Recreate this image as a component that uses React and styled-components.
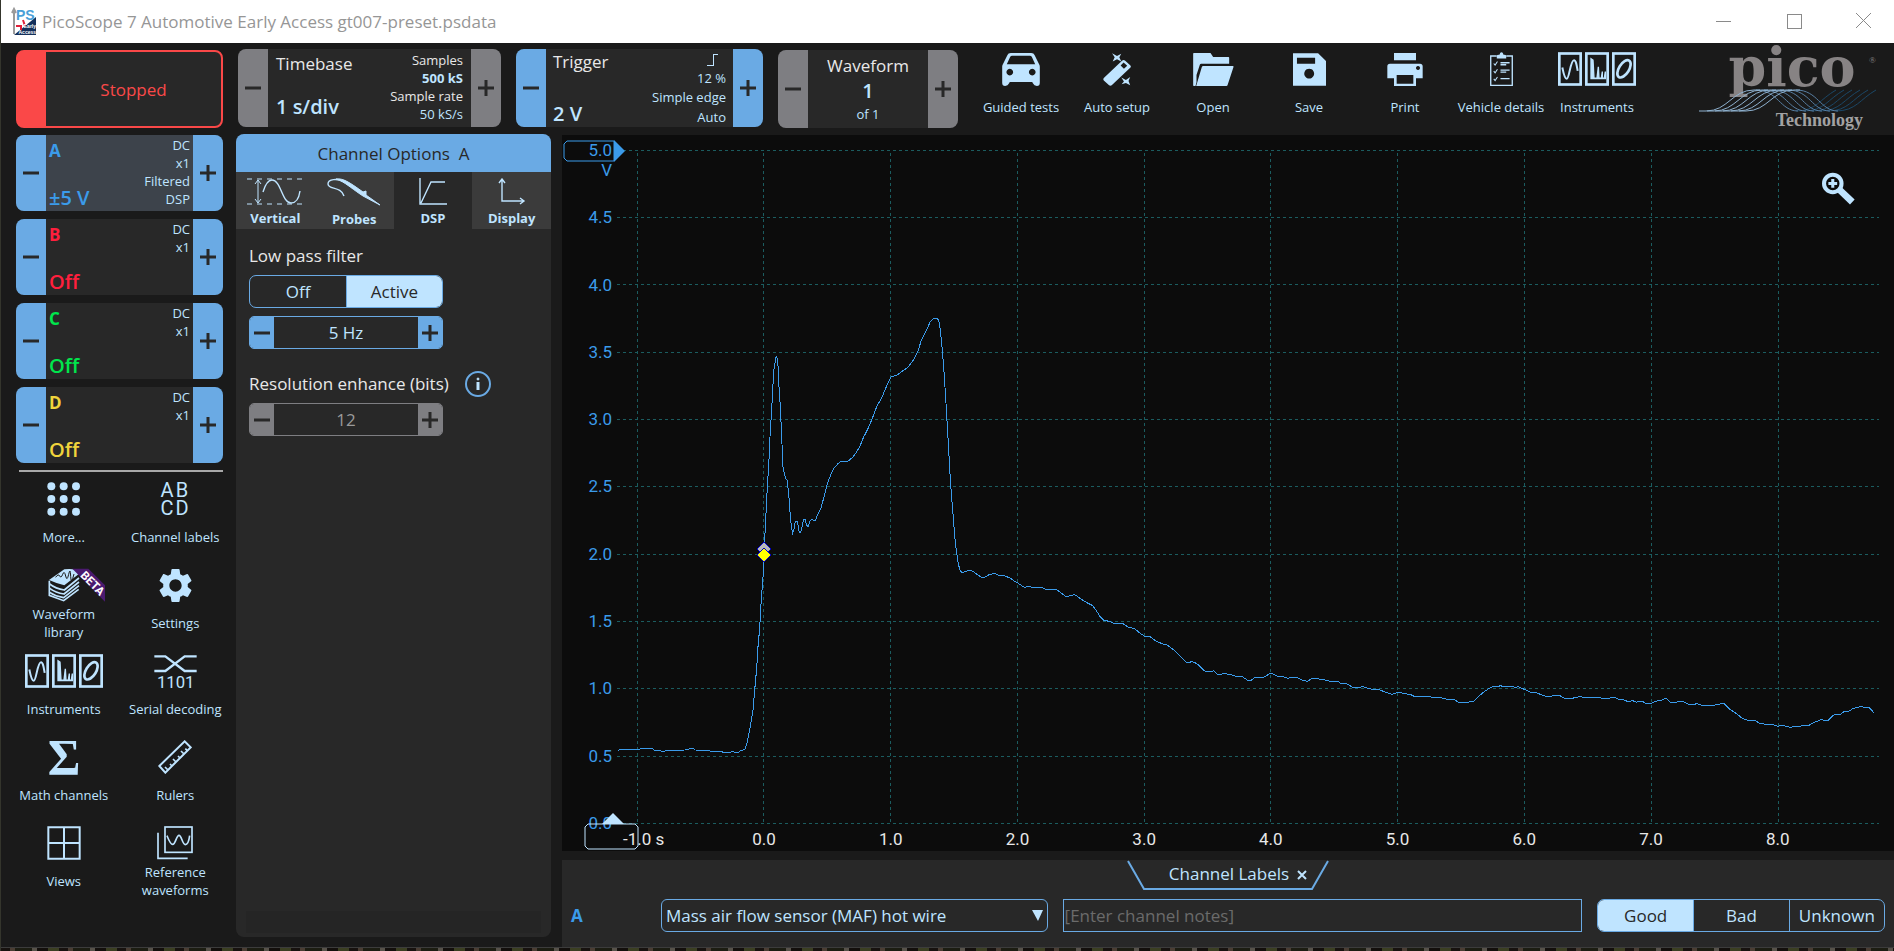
import React from "react";
import styled, { createGlobalStyle, ThemeProvider, css } from "styled-components";
import { MdSettings } from "react-icons/md";

const theme = {
  bg: "#1a1a1a",
  card: "#282828",
  blue: "#6aaae4",
  grey: "#7e7e82",
  pale: "#bfe4ff",
  white: "#e8e8e8",
  red: "#fa4848",
  trace: "#3b9bea",
  grid: "#1b5c5f",
  plot: "#0c0c0c",
  sm: "13px",
  md: "17px",
  lg: "20px",
};

const GlobalStyle = createGlobalStyle`
  *, *::before, *::after { box-sizing: border-box; }
  body { margin: 0; background: #1a1a1a; }
  body, button, input, select { font-family: "Open Sans", "Noto Sans", sans-serif; }
  button { padding: 0; border: 0; background: none; color: inherit; font-size: inherit; cursor: pointer; }
`;

/* ---------- window frame ---------- */

const Window = styled.div`
  display: flex;
  flex-direction: column;
  min-height: 100vh;
  border-left: 1px solid #34352c;
  color: ${(p) => p.theme.white};
  font-size: ${(p) => p.theme.md};
`;

const TitleBar = styled.header`
  display: flex;
  align-items: center;
  gap: 10px;
  height: 43px;
  padding-left: 11px;
  background: #fff;
`;

const Title = styled.h1`
  flex: 1;
  margin: 0 0 0 -5px;
  font-size: ${(p) => p.theme.md};
  font-weight: 400;
  color: #969696;
`;

const WindowButton = styled.button`
  display: flex;
  align-items: center;
  justify-content: center;
  align-self: flex-start;
  width: 60px;
  height: 41px;
`;

const DesktopEdge = styled.div`
  height: 5px;
  border-top: 1px solid #3c3c3c;
  background: repeating-linear-gradient(90deg, #17120f 0 9px, #4a3d33 9px 14px, #1c1d12 14px 31px, #57524a 31px 36px, #130f0c 36px 47px, #3b3f22 47px 58px);
`;

/* ---------- top bar ---------- */

const TopBar = styled.div`
  display: flex;
  align-items: flex-start;
  gap: 15px;
  height: 92px;
  padding: 6px 14px 0 15px;
  background: ${(p) => p.theme.bg};
`;

const StopButton = styled.button`
  display: flex;
  width: 207px;
  height: 78px;
  margin-top: 1px;
  border: 2px solid ${(p) => p.theme.red};
  border-left-width: 30px;
  border-radius: 8px;
  background: ${(p) => p.theme.card};
  color: ${(p) => p.theme.red};
  font-size: ${(p) => p.theme.md};
  align-items: center;
  justify-content: center;
`;

const Control = styled.section`
  display: flex;
  flex: none;
  width: ${(p) => p.$width}px;
  height: ${(p) => p.$height || 78}px;
  margin-top: ${(p) => (p.$low ? 1 : 0)}px;
  border-radius: 8px;
  overflow: hidden;
  background: ${(p) => (p.$selected ? "#3d434b" : p.theme.card)};
`;

const Step = styled.button`
  display: flex;
  flex: none;
  align-items: center;
  justify-content: center;
  width: ${(p) => p.$width || 30}px;
  background: ${(p) => (p.$muted ? p.theme.grey : p.theme.blue)};
`;

const ControlBody = styled.div`
  display: flex;
  flex: 1;
  justify-content: space-between;
  padding: ${(p) => p.$pad || "2px 8px"};
`;

const Stack = styled.div`
  display: flex;
  flex-direction: column;
  justify-content: space-between;
  padding: ${(p) => p.$pad || 0};
`;

const Name = styled.span`
  font-size: ${(p) => p.theme.md};
  line-height: 22px;
  font-weight: ${(p) => (p.$strong ? 700 : 400)};
  color: ${(p) => p.$color || p.theme.white};
`;

const Value = styled.span`
  font-size: ${(p) => p.theme.lg};
  line-height: 24px;
  font-weight: 600;
  color: ${(p) => p.$color || p.theme.pale};
`;

const Details = styled.div`
  display: flex;
  flex-direction: column;
  align-items: flex-end;
  font-size: ${(p) => p.theme.sm};
  line-height: 18px;
  color: ${(p) => p.theme.pale};
  ${(p) => p.$spread && css`justify-content: space-between;`}
`;

const EdgeMark = styled.span`
  display: flex;
  padding: 3px 7px 0 0;
`;

const Muted = styled.span`
  color: ${(p) => p.theme.white};
`;

const Centered = styled.div`
  display: flex;
  flex: 1;
  flex-direction: column;
  align-items: center;
  justify-content: center;
  gap: 2px;
`;

const Small = styled.span`
  font-size: ${(p) => p.theme.sm};
  line-height: 18px;
  color: ${(p) => p.theme.pale};
`;

const Tools = styled.nav`
  display: flex;
  flex: 1;
`;

const ToolButton = styled.button`
  display: flex;
  flex-direction: column;
  align-items: center;
  width: 96px;
  padding-top: 3px;
  font-size: ${(p) => p.theme.sm};
  line-height: 18px;
  color: ${(p) => p.theme.pale};
  white-space: nowrap;
`;

const IconBox = styled.span`
  display: flex;
  align-items: center;
  justify-content: center;
  height: 34px;
  flex: none;
  color: ${(p) => p.theme.pale};
`;

const ToolLabel = styled.span`
  margin-top: 12px;
`;

/* ---------- main area ---------- */

const Main = styled.main`
  display: flex;
  flex: 1;
  background: ${(p) => p.theme.bg};
`;

const Sidebar = styled.aside`
  width: 223px;
  margin-left: 7px;
`;

const Channels = styled.div`
  display: flex;
  flex-direction: column;
  gap: 8px;
  padding: 0 8px;
`;

const Rule = styled.hr`
  height: 2px;
  margin: 7px 8px 0 11px;
  border: 0;
  background: #a8a8a8;
`;

const Menu = styled.nav`
  display: grid;
  grid-template-columns: 1fr 1fr;
  row-gap: 13px;
  margin-top: 10px;
`;

const MenuButton = styled.button`
  display: flex;
  flex-direction: column;
  align-items: center;
  gap: 3px;
  font-size: ${(p) => p.theme.sm};
  line-height: 18px;
  color: ${(p) => p.theme.pale};
`;

const MenuLabel = styled.span`
  display: flex;
  align-items: center;
  height: 36px;
  max-width: 98px;
`;

const Panel = styled.section`
  display: flex;
  flex-direction: column;
  width: 315px;
  margin: -1px 11px 10px 5px;
  border-radius: 8px;
  overflow: hidden;
  background: ${(p) => p.theme.card};
`;

const PanelTitle = styled.h2`
  margin: 0;
  height: 38px;
  background: ${(p) => p.theme.blue};
  color: #282828;
  font-size: ${(p) => p.theme.md};
  font-weight: 400;
  line-height: 40px;
  text-align: center;
  white-space: pre;
`;

const Tabs = styled.div`
  display: grid;
  grid-template-columns: repeat(4, 1fr);
`;

const Tab = styled.button`
  display: flex;
  flex-direction: column;
  align-items: center;
  gap: 4px;
  height: 57px;
  padding-top: 6px;
  background: ${(p) => (p.$open ? p.theme.card : "#3b3b3b")};
  color: ${(p) => p.theme.pale};
  font-size: ${(p) => p.theme.sm};
  line-height: 18px;
  font-weight: 700;
`;

const PanelBody = styled.div`
  flex: 1;
  padding: 16px 13px 0;
`;

const PanelFoot = styled.div`
  height: 22px;
  margin: 0 10px 4px;
  background: #252525;
`;

const FieldLabel = styled.div`
  display: flex;
  align-items: center;
  gap: 15px;
  height: 22px;
  line-height: 22px;
  white-space: nowrap;
`;

const Segments = styled.div`
  display: grid;
  grid-template-columns: repeat(${(p) => p.$count}, 1fr);
  width: ${(p) => p.$width}px;
  height: 33px;
  margin-top: ${(p) => p.$top || 0}px;
  border: 1px solid ${(p) => p.theme.blue};
  border-radius: 7px;
  overflow: hidden;
`;

const Segment = styled.button`
  background: ${(p) => (p.$on ? p.theme.pale : "transparent")};
  color: ${(p) => (p.$on ? "#282828" : p.theme.pale)};
  & + & { border-left: 1px solid ${(p) => p.theme.blue}; }
`;

const Spinner = styled.div`
  display: flex;
  width: 194px;
  height: 33px;
  margin-top: 8px;
  border: 1px solid ${(p) => (p.$muted ? p.theme.grey : p.theme.blue)};
  border-radius: 5px;
  overflow: hidden;
`;

const SpinnerValue = styled.output`
  flex: 1;
  line-height: 32px;
  text-align: center;
  color: ${(p) => (p.$muted ? "#9a9a9a" : p.theme.pale)};
`;

const Group = styled.div`
  margin-bottom: 24px;
`;

/* ---------- chart ---------- */

const Workspace = styled.div`
  display: flex;
  flex: 1;
  flex-direction: column;
  min-width: 0;
`;

const Chart = styled.section`
  position: relative;
  display: grid;
  flex: 1;
  grid-template-columns: 55px 1fr 15px;
  grid-template-rows: 15px 1fr 27px;
  background: ${(p) => p.theme.plot};
  font-family: Roboto, sans-serif;
`;

const YAxis = styled.div`
  grid-area: 2 / 1;
  display: flex;
  flex-direction: column;
  justify-content: space-between;
  margin: -10px 0 -9px;
  padding-right: 5px;
  color: ${(p) => p.theme.trace};
  line-height: 20px;
  text-align: right;
`;

const YTick = styled.div`
  height: 20px;
`;

const XAxis = styled.div`
  grid-area: 3 / 1 / 4 / 4;
  display: flex;
  margin: 5px 53px 0 12px;
  line-height: 20px;
  text-align: center;
`;

const XTick = styled.div`
  flex: 1 0 0;
  white-space: pre;
`;

const Plot = styled.svg`
  grid-area: 2 / 2;
  width: 100%;
  height: 100%;
  overflow: visible;
`;

const AxisFlag = styled.svg`
  position: absolute;
  left: 1px;
  top: 5px;
`;

const TimeFlag = styled.svg`
  position: absolute;
  left: 21px;
  bottom: 1px;
`;

const Trigger = styled.svg`
  position: absolute;
  left: calc(55px + (100% - 70px) * 147 / 1262 - 8px);
  top: calc(15px + (100% - 42px) * 401 / 673 - 11px);
`;

const ZoomButton = styled.button`
  position: absolute;
  right: 39px;
  top: 37px;
  color: ${(p) => p.theme.pale};
`;

/* ---------- channel labels dock ---------- */

const Dock = styled.section`
  margin-top: 9px;
  height: 87px;
  background: ${(p) => p.theme.card};
`;

const DockTab = styled.div`
  display: flex;
  align-items: center;
  justify-content: center;
  gap: 8px;
  width: 202px;
  height: 30px;
  margin: 0 auto;
  padding: 0 0 3px 20px;
  position: relative;
  color: ${(p) => p.theme.pale};
  white-space: nowrap;
`;

const DockOutline = styled.svg`
  position: absolute;
  inset: 0;
  pointer-events: none;
`;

const DockRow = styled.div`
  display: flex;
  align-items: center;
  gap: 15px;
  margin-top: 9px;
  padding: 0 9px;
`;

const DockChannel = styled.label`
  width: 75px;
  font-weight: 700;
  color: ${(p) => p.theme.trace};
`;

const SelectWrap = styled.div`
  position: relative;
  flex: 3 1 0;
  color: ${(p) => p.theme.pale};
`;

const Select = styled.select`
  display: block;
  width: 100%;
  height: 33px;
  padding: 0 24px 0 4px;
  appearance: none;
  border: 1px solid ${(p) => p.theme.blue};
  border-radius: 6px;
  background: ${(p) => p.theme.card};
  color: ${(p) => p.theme.pale};
  font-size: ${(p) => p.theme.md};
`;

const Caret = styled.svg`
  position: absolute;
  right: 5px;
  top: 11px;
  pointer-events: none;
`;

const Notes = styled.input`
  flex: 4 1 0;
  min-width: 0;
  height: 33px;
  padding: 0 1px;
  border: 1px solid ${(p) => p.theme.blue};
  background: ${(p) => p.theme.card};
  color: ${(p) => p.theme.pale};
  font-size: ${(p) => p.theme.md};
  &::placeholder { color: #6b6b6b; opacity: 1; }
`;

/* ---------- icons ---------- */

const Minus = () => (
  <svg width="16" height="16" stroke="#282828" strokeWidth="3" aria-label="minus"><path d="M0 8H16" /></svg>
);
const Plus = () => (
  <svg width="16" height="16" stroke="#282828" strokeWidth="3" aria-label="plus"><path d="M0 8H16M8 0V16" /></svg>
);

const CarIcon = () => (
  <svg width="38" height="33" viewBox="0 0 114 100" fill="currentColor" fillRule="evenodd">
    <path d="M16 6Q18 0 26 0H88Q96 0 98 6L113 36Q114 38 114 42V90Q114 100 105 100Q97 100 93 92L91 88H23L21 92Q17 100 9 100Q0 100 0 90V42Q0 38 1 36ZM30 8Q26 8 24 12L14 34H100L90 12Q88 8 84 8ZM23 48a10 10 0 1 0 .1 0ZM91 48a10 10 0 1 0 .1 0Z" />
  </svg>
);
const WandIcon = () => (
  <svg width="28" height="33" viewBox="0 0 84 100" fill="currentColor" fillRule="evenodd">
    <path d="M58 23Q62 19 66 23L82 37Q86 41 82 45L26 98Q22 101 18 98L2 83Q-1 80 2 76ZM62 29L53 38L63 48L73 39Z" />
    <path d="M27 1L42 9L55 2L49 13L55 26L42 19L29 26L35 13ZM55 74L69 82L82 73L77 85L82 98L69 91L56 95L63 86Z" />
  </svg>
);
const FolderIcon = () => (
  <svg width="41" height="33" viewBox="0 0 122 99" fill="currentColor">
    <path d="M0 2Q0 0 2 0H52L60 12H106Q108 12 108 14V32H24Q21 32 20 35L10 66V88L7 99H2Q0 99 0 97Z" />
    <path d="M30 39H119Q122 39 121 42L103 97Q102 99 100 99H9L26 42Q27 39 30 39Z" />
  </svg>
);
const SaveIcon = () => (
  <svg width="33" height="33" viewBox="0 0 100 99" fill="currentColor" fillRule="evenodd">
    <path d="M0 0H76L100 24V99H0ZM12 14V32H67V14ZM49 47a15 15 0 1 0 .1 0Z" />
  </svg>
);
const PrintIcon = () => (
  <svg width="36" height="33" viewBox="0 0 106 99" fill="currentColor" fillRule="evenodd">
    <path d="M20 0H86V22H20ZM8 32H98Q106 32 106 40V76H86V99H20V76H0V40Q0 32 8 32ZM28 66V92H78V66ZM92 39a6 6 0 1 0 .1 0Z" />
  </svg>
);
const ClipboardIcon = () => (
  <svg width="23" height="34" viewBox="0 0 68 101" fill="none" stroke="currentColor" strokeWidth="4">
    <path d="M20 12H2V99H66V12H48" />
    <path d="M20 19V12Q20 8 26 8H28Q30 1 34 1Q38 1 40 8H42Q48 8 48 12V19Z" fill="currentColor" stroke="none" />
    <path d="M31 32H58M31 38H48M31 54H58M31 60H48M31 79H58" />
    <path d="M11 34L15 39L22 28M11 57L15 62L22 51M11 80L15 85L22 74" strokeWidth="3" />
  </svg>
);
const InstrumentsIcon = () => (
  <svg width="78" height="34" viewBox="0 0 234 101" fill="none" stroke="currentColor">
    <g strokeWidth="8">
      <rect x="4" y="4" width="64" height="93" />
      <rect x="85" y="4" width="64" height="93" />
      <rect x="166" y="4" width="64" height="93" />
    </g>
    <path d="M13 46C17 66 21 80 26 80C34 80 37 24 48 24C54 24 56 38 59 56" strokeWidth="6" />
    <path d="M99 20V79H142V58L139 78L133 78V58L130 78H123L121 44L117 78H108L105 24Z" strokeWidth="4" fill="currentColor" />
    <ellipse cx="198" cy="50" rx="15" ry="29" transform="rotate(32 198 50)" strokeWidth="8" />
  </svg>
);
const MoreIcon = () => (
  <svg width="33" height="34" viewBox="0 0 99 102" fill="currentColor">
    {[13, 51, 89].map((y) => [13, 50, 87].map((x) => <circle key={x + "-" + y} cx={x} cy={y} r="12" />))}
  </svg>
);
const LabelsIcon = () => (
  <svg width="30" height="34" overflow="visible" fill="currentColor" fontFamily="Roboto, sans-serif" fontSize="20">
    <text textAnchor="middle">
      <tspan x="7" y="15">A</tspan><tspan x="22" y="15">B</tspan>
      <tspan x="7" y="33">C</tspan><tspan x="22" y="33">D</tspan>
    </text>
  </svg>
);
const LibraryIcon = () => (
  <svg width="82" height="34" viewBox="0 0 246 102" fill="none" overflow="visible">
    <path d="M78 36L124 4Q150 0 178 10L124 52Q100 46 78 36Z" fill="currentColor" />
    <path d="M98 28q8-12 12-4t9-5t9 5t9-5t6 6t10-7" stroke="#1a1a1a" strokeWidth="3" />
    <g stroke="currentColor" strokeWidth="5">
      <path d="M79 38V82L122 98L167 64" />
      <path d="M80 48Q98 62 124 66L168 30" />
      <path d="M80 61Q98 74 123 78L168 42" />
      <path d="M80 73Q98 85 122 89L168 53" />
    </g>
    <path d="M148 2H196L246 52V101Z" fill="#4b1a70" />
    <text transform="translate(170 24) rotate(45)" fill="#fff" fontFamily="Roboto, sans-serif" fontWeight="700" fontSize="35">BETA</text>
  </svg>
);
const SerialIcon = () => (
  <svg width="43" height="34" viewBox="0 0 129 102" overflow="visible" fill="none" stroke="currentColor">
    <path d="M1 7H34L92 51H128M1 51H34L92 7H128" strokeWidth="7" />
    <text x="65" y="101" fill="currentColor" stroke="none" textAnchor="middle" fontFamily="Roboto, sans-serif" fontSize="50">1101</text>
  </svg>
);
const SigmaIcon = () => (
  <svg width="34" height="34" overflow="visible" fill="currentColor">
    <text x="17" y="34" textAnchor="middle" fontFamily="Liberation Serif, serif" fontWeight="700" fontSize="50">Σ</text>
  </svg>
);
const RulerIcon = () => (
  <svg width="34" height="34" viewBox="0 0 102 102" fill="none" stroke="currentColor" strokeWidth="6">
    <path d="M4 78L80 4L98 22L22 98Z" />
    <path d="M30 90L21 81M42 78L36 72M54 66L45 57M66 54L60 48M78 42L69 33M88 32L82 26" strokeWidth="5" />
  </svg>
);
const ViewsIcon = () => (
  <svg width="34" height="34" viewBox="0 0 102 102" fill="none" stroke="currentColor" strokeWidth="6">
    <path d="M4 4H98V98H4ZM51 4V98M4 51H98" />
  </svg>
);
const ReferenceIcon = () => (
  <svg width="36" height="34" viewBox="0 0 108 102" fill="none" stroke="currentColor" strokeWidth="5">
    <rect x="24" y="3" width="81" height="76" />
    <path d="M3 20V97H92" />
    <path d="M30 29C36 44 40 55 47 55C56 55 58 28 66 28C74 28 76 56 85 56C92 56 96 44 98 29" />
  </svg>
);

const VerticalIcon = () => (
  <svg width="56" height="27" fill="none" stroke="currentColor" strokeWidth="2">
    <path d="M0 1H56M0 26H56" strokeDasharray="5 5" strokeWidth="1" />
    <path d="M11 2V25M8 6L11 2L14 6M8 21L11 25L14 21" strokeWidth="1" />
    <path d="M16 14C19 4 22 2 25 2C34 2 35 25 44 25C49 25 52 20 53 13" strokeWidth="1.4" />
  </svg>
);
const ProbeIcon = () => (
  <svg width="54" height="28" fill="none" stroke="currentColor">
    <path d="M17 18C14 8 1 12 1 6C1 1 10 0 18 4" strokeWidth="1.4" />
    <path d="M9 1C16 0 22 4 36 14L39 13L39 17L53 27L36 18L33 16C24 10 18 4 9 1Z" fill="currentColor" strokeWidth="1" />
  </svg>
);
const DspIcon = () => (
  <svg width="28" height="27" fill="none" stroke="currentColor" strokeWidth="1.4">
    <path d="M1 0V26H28M2 25L12 4H26" />
  </svg>
);
const DisplayIcon = () => (
  <svg width="28" height="27" fill="none" stroke="currentColor" strokeWidth="1.4">
    <path d="M4 1V23H26M1 5L4 1L7 5M22 20L26 23L22 26" />
  </svg>
);
const InfoIcon = () => (
  <svg width="28" height="28" fill="none" stroke="#6aaae4" strokeWidth="2">
    <circle cx="14" cy="14" r="12" />
    <circle cx="14" cy="9" r="1" fill="#bfe4ff" stroke="#bfe4ff" strokeWidth="1" />
    <path d="M14 12V20" stroke="#bfe4ff" strokeWidth="3" />
  </svg>
);
const ZoomIcon = () => (
  <svg width="33" height="33" viewBox="0 0 98 96" fill="none" stroke="currentColor">
    <circle cx="32" cy="33" r="26" strokeWidth="12" />
    <path d="M32 20V46M19 33H45" strokeWidth="9" />
    <path d="M50 50L90 88" strokeWidth="20" />
  </svg>
);
const EdgeIcon = () => (
  <svg width="12" height="14" fill="none" stroke="currentColor" strokeWidth="1" shapeRendering="crispEdges"><path d="M0 12H6V1H11" /></svg>
);
const AppIcon = () => (
  <svg width="25" height="26" overflow="visible">
    <path d="M2 0V25M0 4L2 0L4 4" stroke="#9a9a9a" strokeWidth="2" fill="none" />
    <path d="M24 8V26H2Z" fill="#14305a" />
    <path d="M4 17H9V21M11 11L13 17" stroke="#e0203a" strokeWidth="2" fill="none" />
    <text x="4" y="11" fontSize="14" fontWeight="700" fill="#4a9fd8" fontFamily="Liberation Sans, sans-serif">PS</text>
    <text x="24" y="19" fontSize="5" fontWeight="700" fill="#fff" textAnchor="end" fontFamily="Liberation Sans, sans-serif">Early</text>
    <text x="24" y="25" fontSize="5" fontWeight="700" fill="#fff" textAnchor="end" fontFamily="Liberation Sans, sans-serif">Access</text>
  </svg>
);

const PicoLogo = () => (
  <svg width="182" height="80" viewBox="0 0 182 80" overflow="visible" role="img" aria-label="pico Technology">
    <text x="94" y="37" textAnchor="middle" fontFamily="DejaVu Serif, serif" fontWeight="700" fontSize="54" fill="#878384">pico</text>
    <text x="171" y="14" fontFamily="Liberation Serif, serif" fontSize="9" fill="#878384">®</text>
    <g fill="none" strokeWidth="1">
      {[0, 1, 2, 3, 4, 5].map((i) => (
        <path key={"c" + i} transform={`translate(${i * 8} 0)`} stroke="#1b4766" d="M98 62C118 62 122 50 138 41" />
      ))}
      {[0, 1, 2, 3, 4, 5].map((i) => (
        <path key={"b" + i} transform={`translate(${i * 8} 0)`} stroke="#587fa3" d="M58 41C80 41 82 62 100 62" />
      ))}
      {[0, 1, 2, 3, 4, 5].map((i) => (
        <path key={"a" + i} transform={`translate(${i * 8} 0)`} stroke="#8fb2d0" d="M1 62H8C30 62 34 41 56 41H62" />
      ))}
    </g>
    <text x="165" y="77" textAnchor="end" fontFamily="Liberation Serif, serif" fontWeight="700" fontSize="18" fill="#a2a2a2">Technology</text>
  </svg>
);

/* ---------- data ---------- */

const channels = [
  { id: "A", value: "±5 V", color: "#3b9bea", details: ["DC", "x1", "Filtered", "DSP"], selected: true },
  { id: "B", value: "Off", color: "#ff1f3d", details: ["DC", "x1"] },
  { id: "C", value: "Off", color: "#00e64d", details: ["DC", "x1"] },
  { id: "D", value: "Off", color: "#f0d43c", details: ["DC", "x1"] },
];

const tools = [
  ["Guided tests", CarIcon],
  ["Auto setup", WandIcon],
  ["Open", FolderIcon],
  ["Save", SaveIcon],
  ["Print", PrintIcon],
  ["Vehicle details", ClipboardIcon],
  ["Instruments", InstrumentsIcon],
];

const GearIcon = () => <MdSettings size={41} />;

const menu = [
  ["More...", MoreIcon],
  ["Channel labels", LabelsIcon],
  ["Waveform library", LibraryIcon],
  ["Settings", GearIcon],
  ["Instruments", InstrumentsIcon],
  ["Serial decoding", SerialIcon],
  ["Math channels", SigmaIcon],
  ["Rulers", RulerIcon],
  ["Views", ViewsIcon],
  ["Reference waveforms", ReferenceIcon],
];

const tabs = [
  ["Vertical", VerticalIcon],
  ["Probes", ProbeIcon],
  ["DSP", DspIcon],
  ["Display", DisplayIcon],
];

const volts = ["5.0", "4.5", "4.0", "3.5", "3.0", "2.5", "2.0", "1.5", "1.0", "0.5", "0.0"];
const seconds = ["   -1.0 s", "0.0", "1.0", "2.0", "3.0", "4.0", "5.0", "6.0", "7.0", "8.0"];

// Captured trace, in blocks that each carry their own origin.
const blocks = [
  {
    x: -51, y: 390,
    points: "55,1411 60,1408 118,1408 125,1405 132,1407 143,1405 157,1406 166,1413 180,1411 186,1414 205,1412 212,1411 255,1410 270,1406 280,1406 286,1410 325,1411 333,1414 362,1414 370,1417 390,1417 398,1414 405,1417 415,1417 420,1413 427,1411 436,1406 441,1388 448,1355 455,1313 459,1290 465,1220 470,1165 474,1100 479,1045 484,955 490,880 493,800 496,740 502,620 506,560 510,470 516,370 521,275 525,248 528,230 531,233 534,257 537,320 541,380 545,470 549,560 553,582 557,596 562,602 567,655 571,710 575,745 578,759 582,748 586,723 591,724 595,740 598,758 602,758 606,740 611,718 615,718 620,737 625,739 630,724 635,718 645,723 655,700 663,685 672,650 681,615 690,590 700,567 712,553 722,544 743,544 757,533 770,516 780,498 790,473 803,448 817,415 830,380 845,354 860,318 873,290 890,286 905,275 925,261 940,240 953,216 963,184 978,154 990,127 998,117 1010,115 1016,120 1021,150 1027,210 1033,290 1038,370 1045,490 1051,600 1058,690 1066,790 1073,840 1079,869 1086,878 1095,875 1105,871 1117,873 1128,881 1145,892 1155,891 1167,884 1183,880 1195,885 1213,887 1230,894 1245,905",
  },
  {
    x: 1149, y: 1170,
    points: "52,128 62,135 73,142 85,140 100,142 128,143 138,148 158,148 172,150 185,160 197,169 207,168 222,164 230,167 240,175 255,185 278,197 288,210 300,230 311,241 328,244 342,250 368,250 385,262 403,265 418,278 433,288 450,290 470,305 490,312 503,316 522,330 540,348 558,366 570,367 575,364 585,368 598,377 613,392 620,395 636,394 640,392 653,403 663,403 670,400 693,404 707,409 727,410 743,421 753,421 765,412 782,414 795,410 805,403 815,400 832,408 850,410 865,415 875,412 890,412 907,421 922,424 937,415 950,416 972,419 990,424 1015,425 1022,430 1040,431 1058,442 1082,442 1088,439 1098,443 1118,448 1138,449 1155,456 1175,463 1185,460 1195,457 1215,461 1232,464 1243,469 1290,470 1297,472",
  },
  {
    x: 2349, y: 1350,
    points: "122,293 142,298 162,298 175,307 205,307 210,304 223,303 235,290 250,277 272,262 280,260 295,259 302,257 310,260 337,260 345,262 355,260 373,268 392,277 410,279 440,290 453,289 460,286 480,287 493,295 518,295 525,292 542,290 552,292 600,293 607,295 627,295 633,292 645,292 657,298 670,299 682,304 692,304 696,301 710,307 716,304 727,304 737,310 755,310 765,304 785,301 793,296 799,296 812,307 830,307 835,304 849,304 865,313 885,313 890,310 905,316 940,316 958,313 963,310 973,311 988,327 1010,341 1028,356 1045,361 1065,362 1080,370 1098,373 1120,374 1135,379 1142,376 1152,377 1170,382 1185,379 1200,379 1207,376 1227,376 1240,368 1255,363 1263,358 1272,361 1285,361 1298,347 1305,343 1322,343 1332,335 1348,333 1360,325 1375,322 1385,319 1390,322 1408,323 1415,330 1421,338",
  },
];

const trace = blocks
  .flatMap((b) => b.points.split(" ").map((p) => {
    const [x, y] = p.split(",").map(Number);
    return `${x + b.x},${y + b.y}`;
  }))
  .join(" ");

const gridX = seconds.map((_, i) => 60 + (i * 3423) / 9);
const gridY = volts.map((_, i) => (i * 2019) / 10 + 1);

/* ---------- parts ---------- */

function ChannelCard({ channel }) {
  return (
    <Control $width={207} $height={76} $selected={channel.selected}>
      <Step aria-label={`Channel ${channel.id} down`}><Minus /></Step>
      <ControlBody $pad="1px 3px">
        <Stack $pad="4px 0 0">
          <Name $strong $color={channel.color}>{channel.id}</Name>
          <Value $color={channel.color}>{channel.value}</Value>
        </Stack>
        <Details>
          {channel.details.map((d) => <span key={d}>{d}</span>)}
        </Details>
      </ControlBody>
      <Step aria-label={`Channel ${channel.id} up`}><Plus /></Step>
    </Control>
  );
}

function Scope() {
  return (
    <Chart aria-label="Waveform view">
      <YAxis>
        {volts.map((v, i) => (
          <YTick key={v}>{v}{i === 0 && <div>V</div>}</YTick>
        ))}
      </YAxis>
      <Plot viewBox="0 0 3786 2022" preserveAspectRatio="none" shapeRendering="crispEdges" fill="none">
        <g stroke={theme.grid} strokeDasharray="3 3">
          {gridY.map((y) => <path key={y} d={`M0 ${y}H3786`} vectorEffect="non-scaling-stroke" />)}
          {gridX.map((x) => <path key={x} d={`M${x} 10V2022`} vectorEffect="non-scaling-stroke" />)}
        </g>
        <polyline points={trace} stroke={theme.trace} vectorEffect="non-scaling-stroke" />
      </Plot>
      <XAxis>
        {seconds.map((s) => <XTick key={s}>{s}</XTick>)}
      </XAxis>
      <AxisFlag width="62" height="22" fill="none">
        <path d="M4 1H51V21H4L1 18V4Z" stroke={theme.trace} />
        <path d="M51 0L62 11L51 22Z" fill={theme.trace} />
      </AxisFlag>
      <TimeFlag width="56" height="37" fill="none">
        <path d="M5 11H52L55 14V33L52 36H5L2 33V14Z" stroke={theme.pale} />
        <path d="M19 11L30 0L41 11Z" fill={theme.pale} />
      </TimeFlag>
      <Trigger width="16" height="22">
        <path d="M8 1L15 8L8 15L1 8Z" fill="#b8b8b8" stroke="#0000c8" />
        <path d="M8 7L15 14L8 21L1 14Z" fill="#ffff00" stroke="#0000c8" />
      </Trigger>
      <ZoomButton aria-label="Zoom in"><ZoomIcon /></ZoomButton>
    </Chart>
  );
}

export default function App() {
  return (
    <ThemeProvider theme={theme}>
      <GlobalStyle />
      <Window>
        <TitleBar>
          <AppIcon />
          <Title>PicoScope 7 Automotive Early Access gt007-preset.psdata</Title>
          <WindowButton aria-label="Minimize">
            <svg width="16" height="16" stroke="#8a8a8a" shapeRendering="crispEdges"><path d="M0 8H15" /></svg>
          </WindowButton>
          <WindowButton aria-label="Maximize">
            <svg width="16" height="16" fill="none" stroke="#8a8a8a" shapeRendering="crispEdges"><rect x="1" y="1" width="14" height="14" /></svg>
          </WindowButton>
          <WindowButton aria-label="Close">
            <svg width="16" height="16" stroke="#8a8a8a"><path d="M0 0L15 15M15 0L0 15" /></svg>
          </WindowButton>
        </TitleBar>

        <TopBar>
          <StopButton>Stopped</StopButton>
          <Control $width={263}>
            <Step $muted aria-label="Timebase down"><Minus /></Step>
            <ControlBody>
              <Stack $pad="2px 0 6px"><Name>Timebase</Name><Value>1 s/div</Value></Stack>
              <Details>
                <Muted>Samples</Muted><b>500 kS</b><Muted>Sample rate</Muted><span>50 kS/s</span>
              </Details>
            </ControlBody>
            <Step $muted aria-label="Timebase up"><Plus /></Step>
          </Control>
          <Control $width={247}>
            <Step aria-label="Trigger down"><Minus /></Step>
            <ControlBody $pad="1px 7px">
              <Stack $pad="1px 0 0"><Name>Trigger</Name><Value>2 V</Value></Stack>
              <Details $spread>
                <EdgeMark><EdgeIcon /></EdgeMark>
                <span>12 %</span><span>Simple edge</span><span>Auto</span>
              </Details>
            </ControlBody>
            <Step aria-label="Trigger up"><Plus /></Step>
          </Control>
          <Control $width={180} $low>
            <Step $muted aria-label="Previous waveform"><Minus /></Step>
            <Centered><Name>Waveform</Name><Value>1</Value><Small>of 1</Small></Centered>
            <Step $muted aria-label="Next waveform"><Plus /></Step>
          </Control>
          <Tools>
            {tools.map(([label, Icon]) => (
              <ToolButton key={label}><IconBox><Icon /></IconBox><ToolLabel>{label}</ToolLabel></ToolButton>
            ))}
          </Tools>
          <PicoLogo />
        </TopBar>

        <Main>
          <Sidebar>
            <Channels>
              {channels.map((c) => <ChannelCard key={c.id} channel={c} />)}
            </Channels>
            <Rule />
            <Menu>
              {menu.map(([label, Icon]) => (
                <MenuButton key={label}><IconBox><Icon /></IconBox><MenuLabel>{label}</MenuLabel></MenuButton>
              ))}
            </Menu>
          </Sidebar>

          <Panel>
            <PanelTitle>{"Channel Options  A"}</PanelTitle>
            <Tabs role="tablist">
              {tabs.map(([label, Icon]) => (
                <Tab key={label} role="tab" aria-selected={label === "DSP"} $open={label === "DSP"}><Icon />{label}</Tab>
              ))}
            </Tabs>
            <PanelBody>
              <Group>
                <FieldLabel>Low pass filter</FieldLabel>
                <Segments $count={2} $width={194} $top={8} role="group" aria-label="Low pass filter">
                  <Segment aria-pressed="false">Off</Segment>
                  <Segment $on aria-pressed="true">Active</Segment>
                </Segments>
                <Spinner>
                  <Step $width={24} aria-label="Decrease frequency"><Minus /></Step>
                  <SpinnerValue>5 Hz</SpinnerValue>
                  <Step $width={24} aria-label="Increase frequency"><Plus /></Step>
                </Spinner>
              </Group>
              <Group>
                <FieldLabel>Resolution enhance (bits)<InfoIcon /></FieldLabel>
                <Spinner $muted>
                  <Step $muted $width={24} aria-label="Decrease resolution"><Minus /></Step>
                  <SpinnerValue $muted>12</SpinnerValue>
                  <Step $muted $width={24} aria-label="Increase resolution"><Plus /></Step>
                </Spinner>
              </Group>
            </PanelBody>
            <PanelFoot />
          </Panel>

          <Workspace>
            <Scope />
            <Dock>
              <DockTab>
                <DockOutline width="202" height="30" fill="none" stroke={theme.blue} strokeWidth="2">
                  <path d="M1 1L17 29H185L201 1" />
                </DockOutline>
                Channel Labels
                <button aria-label="Close channel labels">
                  <svg width="10" height="10" stroke="currentColor" strokeWidth="2"><path d="M1 1L9 9M9 1L1 9" /></svg>
                </button>
              </DockTab>
              <DockRow>
                <DockChannel htmlFor="sensor">A</DockChannel>
                <SelectWrap>
                  <Select id="sensor">
                    <option>Mass air flow sensor (MAF) hot wire</option>
                  </Select>
                  <Caret width="11" height="11" fill="currentColor"><path d="M0 0H11L6 11Z" /></Caret>
                </SelectWrap>
                <Notes aria-label="Channel notes" placeholder="[Enter channel notes]" />
                <Segments $count={3} $width={288} role="group" aria-label="Waveform rating">
                  <Segment $on aria-pressed="true">Good</Segment>
                  <Segment aria-pressed="false">Bad</Segment>
                  <Segment aria-pressed="false">Unknown</Segment>
                </Segments>
              </DockRow>
            </Dock>
          </Workspace>
        </Main>
        <DesktopEdge />
      </Window>
    </ThemeProvider>
  );
}
